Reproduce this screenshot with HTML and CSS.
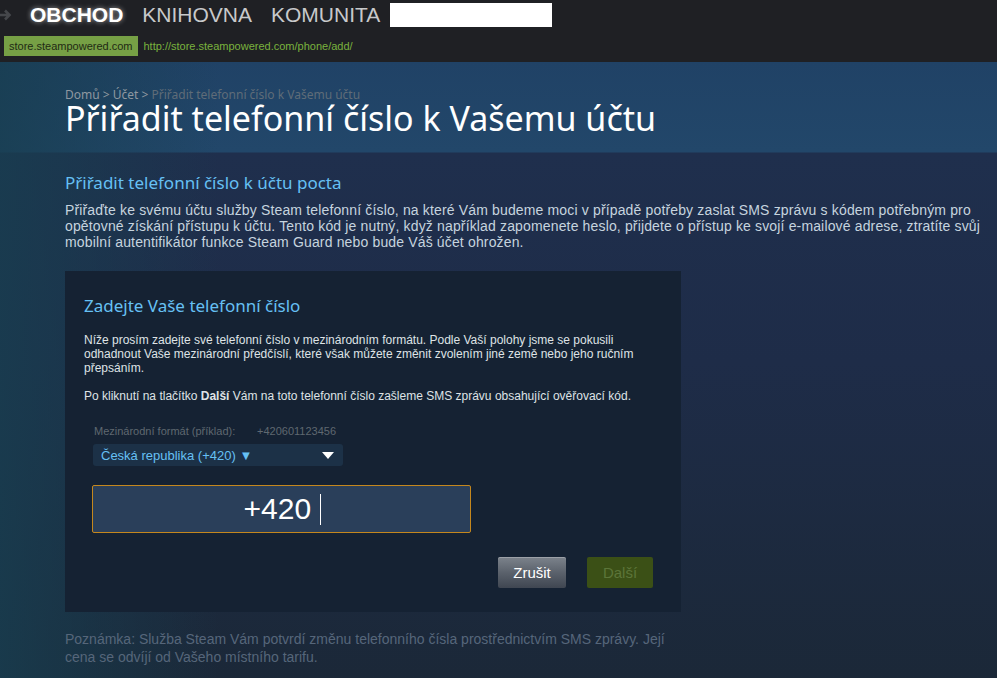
FILE: index.html
```html
<!DOCTYPE html>
<html lang="cs">
<head>
    <meta charset="UTF-8">
    <title>Přiřadit telefonní číslo k Vašemu účtu</title>
    <link rel="stylesheet" href="styles.css">
</head>
<body>
    <div class="topbar">
        <div class="nav">
            <svg class="nav-arrow" width="30" height="26" viewBox="0 0 30 26"><path d="M0 13H9M5 8.5L9.5 13L5 17.5" fill="none" stroke="#45474b" stroke-width="2.6"/></svg>
            <span class="nav-item active">OBCHOD</span>
            <span class="nav-item">KNIHOVNA</span>
            <span class="nav-item">KOMUNITA</span>
            <span class="nav-user"></span>
        </div>
        <div class="urlbar">
            <span class="url-host">store.steampowered.com</span>
            <span class="url-path">http://store.steampowered.com/phone/add/</span>
        </div>
    </div>

    <div class="page">
        <div class="header">
            <div class="breadcrumbs"><a>Domů</a> &gt; <a>Účet</a> &gt; <span class="current">Přiřadit telefonní číslo k Vašemu účtu</span></div>
            <h1>Přiřadit telefonní číslo k Vašemu účtu</h1>
        </div>

        <div class="content">
            <h2>Přiřadit telefonní číslo k účtu pocta</h2>
            <p class="intro">Přiřaďte ke svému účtu služby Steam telefonní číslo, na které Vám budeme moci v případě potřeby zaslat SMS zprávu s kódem potřebným pro opětovné získání přístupu k účtu. Tento kód je nutný, když například zapomenete heslo, přijdete o přístup ke svojí e-mailové adrese, ztratíte svůj mobilní autentifikátor funkce Steam Guard nebo bude Váš účet ohrožen.</p>

            <div class="panel">
                <h3>Zadejte Vaše telefonní číslo</h3>
                <p>Níže prosím zadejte své telefonní číslo v mezinárodním formátu. Podle Vaší polohy jsme se pokusili odhadnout Vaše mezinárodní předčíslí, které však můžete změnit zvolením jiné země nebo jeho ručním přepsáním.</p>
                <p>Po kliknutí na tlačítko <b>Další</b> Vám na toto telefonní číslo zašleme SMS zprávu obsahující ověřovací kód.</p>

                <div class="example">
                    <span class="example-label">Mezinárodní formát (příklad):</span>
                    <span>+420601123456</span>
                </div>
                <div class="country">
                    <span>Česká republika (+420) ▼</span>
                    <svg class="country-arrow" width="12" height="7" viewBox="0 0 12 7"><path d="M0 0H12L6 7z" fill="#fff"/></svg>
                </div>
                <div class="phone-input">+420 <span class="caret"></span></div>

                <div class="buttons">
                    <span class="btn btn-cancel">Zrušit</span>
                    <span class="btn btn-next">Další</span>
                </div>
            </div>

            <p class="note">Poznámka: Služba Steam Vám potvrdí změnu telefonního čísla prostřednictvím SMS zprávy. Její cena se odvíjí od Vašeho místního tarifu.</p>
        </div>
    </div>
</body>
</html>
```

FILE: styles.css
```css
body {
    margin: 0;
    background-color: #1b2838;
    font-family: "Liberation Sans", Arial, sans-serif;
    overflow: hidden;
}
.topbar {
    background-color: #1f2024;
    height: 62px;
    box-sizing: border-box;
    padding-top: 2px;
}
.nav {
    display: flex;
    align-items: center;
    height: 26px;
}
.nav-arrow {
    flex-shrink: 0;
}
.nav-item {
    color: #c8c9cb;
    font-size: 21px;
    margin-right: 19px;
}
.nav-item.active {
    color: #fff;
    font-weight: bold;
    text-shadow: 0 0 5px rgba(255, 255, 255, 0.6);
}
.nav-user {
    width: 162px;
    height: 24px;
    background-color: #fff;
    margin-left: -9px;
}
.urlbar {
    display: flex;
    align-items: center;
    margin-top: 8px;
    padding-left: 4px;
}
.url-host {
    background-color: #76a045;
    color: #1f2a14;
    font-size: 11px;
    padding: 3px 5px;
    line-height: 14px;
}
.url-path {
    color: #7ab23d;
    font-size: 11px;
    margin-left: 6px;
}
.page {
    background:
        linear-gradient(90deg, rgba(24, 62, 80, 0.8) 0, rgba(24, 62, 80, 0) 220px),
        linear-gradient(180deg, #204266 0, #22476a 90px, #1f2f4d 91px, #1e2c48 300px, #1b2838 616px);
    min-height: 616px;
}
.header {
    height: 90px;
    box-sizing: border-box;
    padding: 26px 0 0 65px;
}
.breadcrumbs {
    font-family: "Noto Sans", sans-serif;
    font-size: 12px;
    color: #8f98a0;
    line-height: 14px;
}
.breadcrumbs .current {
    color: #5f6c78;
}
h1 {
    margin: 0;
    font-family: "Noto Sans", sans-serif;
    font-weight: normal;
    font-size: 34px;
    line-height: 32px;
    color: #fff;
}
.content {
    padding: 18px 0 0 65px;
    width: 920px;
}
h2 {
    margin: 0;
    font-family: "Noto Sans", sans-serif;
    font-weight: normal;
    font-size: 17px;
    line-height: 26px;
    color: #66c0f4;
}
.intro {
    margin: 6px 0 0;
    font-size: 14px;
    letter-spacing: 0.15px;
    line-height: 16px;
    color: #c6d4df;
}
.panel {
    margin-top: 21px;
    width: 616px;
    height: 341px;
    box-sizing: border-box;
    padding: 22px 19px 0;
    background-color: #152233;
}
h3 {
    margin: 0 0 14px;
    font-family: "Noto Sans", sans-serif;
    font-weight: normal;
    font-size: 17px;
    line-height: 26px;
    color: #66c0f4;
}
.panel p {
    margin: 0 0 14px;
    font-size: 12px;
    line-height: 14px;
    color: #dfe3e6;
    width: 570px;
}
.example {
    display: flex;
    font-size: 11px;
    color: #5f6870;
    padding-left: 10px;
    margin-top: 22px;
}
.example-label {
    width: 163px;
}
.country {
    display: flex;
    align-items: center;
    justify-content: space-between;
    width: 250px;
    height: 22px;
    box-sizing: border-box;
    margin: 7px 0 0 9px;
    padding: 0 9px 0 8px;
    background-color: #1c3147;
    border-radius: 3px;
    color: #66c0f4;
    font-size: 13px;
}
.phone-input {
    display: flex;
    align-items: center;
    justify-content: center;
    width: 379px;
    height: 48px;
    box-sizing: border-box;
    margin: 19px 0 0 8px;
    padding-left: 2px;
    background-color: #2a3f5a;
    border: 1px solid #c4871d;
    border-radius: 2px;
    color: #fff;
    font-size: 30px;
    white-space: pre;
}
.caret {
    display: inline-block;
    width: 1px;
    height: 31px;
    background-color: #fff;
    margin-left: 1px;
}
.buttons {
    display: flex;
    justify-content: flex-end;
    gap: 21px;
    margin-top: 24px;
    padding-right: 9px;
}
.btn {
    display: flex;
    align-items: center;
    justify-content: center;
    height: 31px;
    border-radius: 2px;
    font-size: 15px;
}
.btn-cancel {
    width: 68px;
    color: #fff;
    background: linear-gradient(180deg, #7c838c 0, #5b626c 50%, #3f4651 100%);
    box-shadow: inset 0 1px 0 rgba(255, 255, 255, 0.25);
}
.btn-next {
    width: 66px;
    color: #5c7539;
    background-color: #3b5016;
}
.note {
    margin: 18px 0 0;
    width: 630px;
    font-size: 14px;
    line-height: 18px;
    color: #56667a;
}
```
